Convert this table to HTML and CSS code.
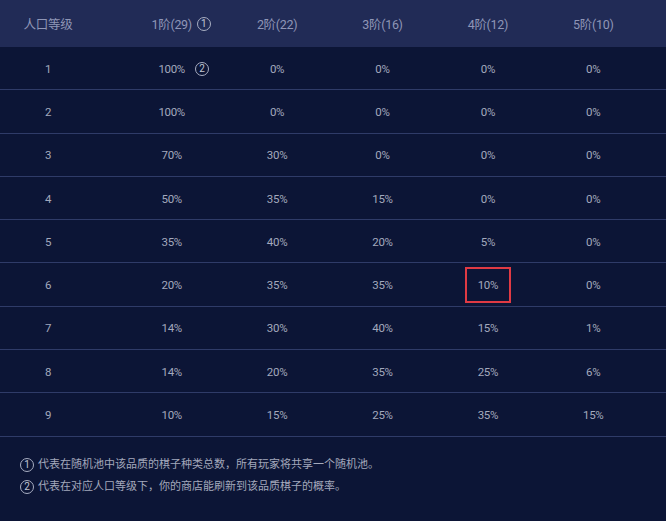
FILE: index.html
```html
<!DOCTYPE html>
<html lang="zh">
<head>
<meta charset="utf-8">
<link rel="stylesheet" href="styles.css">
</head>
<body>
<div class="panel">
  <div class="row head">
    <div class="cell first">人口等级</div>
    <div class="cell"><span class="txt">1阶(29)<span class="mark mh">1</span></span></div>
    <div class="cell">2阶(22)</div>
    <div class="cell">3阶(16)</div>
    <div class="cell">4阶(12)</div>
    <div class="cell">5阶(10)</div>
  </div>
  <div class="row"><div class="cell first">1</div><div class="cell"><span class="txt">100%<span class="mark">2</span></span></div><div class="cell">0%</div><div class="cell">0%</div><div class="cell">0%</div><div class="cell">0%</div></div>
  <div class="row"><div class="cell first">2</div><div class="cell">100%</div><div class="cell">0%</div><div class="cell">0%</div><div class="cell">0%</div><div class="cell">0%</div></div>
  <div class="row"><div class="cell first">3</div><div class="cell">70%</div><div class="cell">30%</div><div class="cell">0%</div><div class="cell">0%</div><div class="cell">0%</div></div>
  <div class="row"><div class="cell first">4</div><div class="cell">50%</div><div class="cell">35%</div><div class="cell">15%</div><div class="cell">0%</div><div class="cell">0%</div></div>
  <div class="row"><div class="cell first">5</div><div class="cell">35%</div><div class="cell">40%</div><div class="cell">20%</div><div class="cell">5%</div><div class="cell">0%</div></div>
  <div class="row"><div class="cell first">6</div><div class="cell">20%</div><div class="cell">35%</div><div class="cell">35%</div><div class="cell"><span class="hl">10%</span></div><div class="cell">0%</div></div>
  <div class="row"><div class="cell first">7</div><div class="cell">14%</div><div class="cell">30%</div><div class="cell">40%</div><div class="cell">15%</div><div class="cell">1%</div></div>
  <div class="row"><div class="cell first">8</div><div class="cell">14%</div><div class="cell">20%</div><div class="cell">35%</div><div class="cell">25%</div><div class="cell">6%</div></div>
  <div class="row"><div class="cell first">9</div><div class="cell">10%</div><div class="cell">15%</div><div class="cell">25%</div><div class="cell">35%</div><div class="cell">15%</div></div>
  <div class="notes">
    <p class="note"><span class="circ">1</span>代表在随机池中该品质的棋子种类总数，所有玩家将共享一个随机池。</p>
    <p class="note"><span class="circ">2</span>代表在对应人口等级下，你的商店能刷新到该品质棋子的概率。</p>
  </div>
</div>
</body>
</html>
```

FILE: styles.css
```css
* { box-sizing: border-box; }
html, body { margin: 0; padding: 0; }
body {
  width: 666px;
  height: 521px;
  background: #0c1536;
  font-family: Roboto, "Noto Sans CJK SC", sans-serif;
  overflow: hidden;
}
.panel { width: 666px; }
.row {
  display: grid;
  grid-template-columns: 119px repeat(5, 105.4px);
  height: 43.3px;
  align-items: center;
  border-bottom: 1px solid #2f3b68;
  color: #a3a9bd;
  font-size: 11.5px;
  letter-spacing: -0.3px;
  padding-top: 1px;
}
.row.head {
  height: 47px;
  background: #212b56;
  border-bottom: none;
  color: #8f96b6;
  font-size: 12.5px;
  padding-top: 0;
}
.cell { text-align: center; }
.cell.first { padding-right: 23px; }
.txt { position: relative; display: inline-block; }
.mark {
  position: absolute;
  left: calc(100% + 10px);
  top: 50%;
  transform: translateY(-50%);
  width: 14px;
  height: 14px;
  border: 1.3px solid #a8aec2;
  border-radius: 50%;
  font-size: 10px;
  line-height: 11.5px;
  text-align: center;
  color: #c0c5d4;
  letter-spacing: 0;
}
.mark.mh { left: calc(100% + 5px); }
.hl {
  display: inline-block;
  width: 46px;
  height: 36px;
  line-height: 32px;
  border: 2px solid #e03a44;
}
.notes { padding: 21px 0 0 20px; }
.note {
  margin: 0 0 8px 0;
  display: flex;
  align-items: center;
  gap: 4px;
  color: #a3a8bb;
  font-size: 11px;
  line-height: 14px;
}
.circ {
  width: 14px;
  height: 14px;
  border: 1.3px solid #a8aec2;
  border-radius: 50%;
  font-size: 10px;
  line-height: 11.5px;
  text-align: center;
  color: #c0c5d4;
  flex: none;
}
```
